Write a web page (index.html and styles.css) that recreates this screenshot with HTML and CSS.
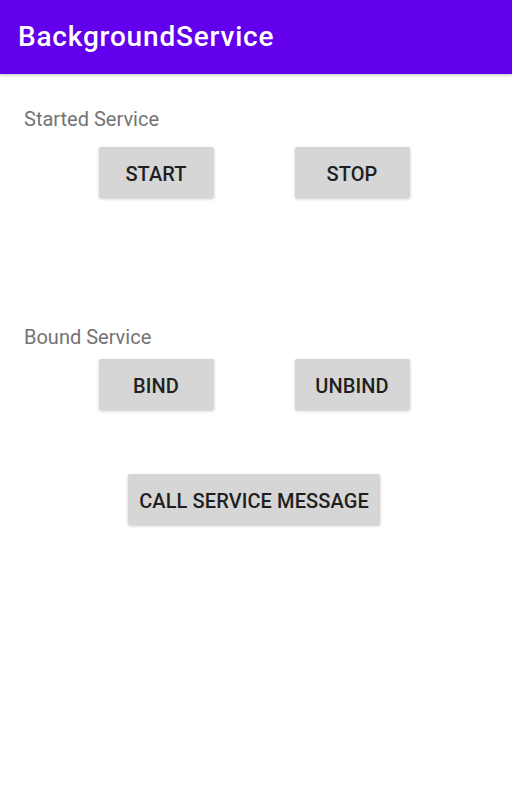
FILE: index.html
```html
<!DOCTYPE html>
<html lang="en">
<head>
    <meta charset="UTF-8">
    <meta name="viewport" content="width=device-width, initial-scale=1.0">
    <title>BackgroundService</title>
    <link rel="stylesheet" href="styles.css">
</head>
<body>
    <header class="app-bar">BackgroundService</header>

    <main class="content">
        <div class="section-label started-label">Started Service</div>
        <div class="button-row started-row">
            <button class="service-button">START</button>
            <button class="service-button">STOP</button>
        </div>

        <div class="section-label bound-label">Bound Service</div>
        <div class="button-row bound-row">
            <button class="service-button">BIND</button>
            <button class="service-button">UNBIND</button>
        </div>

        <div class="button-row message-row">
            <button class="service-button wide">CALL SERVICE MESSAGE</button>
        </div>
    </main>
</body>
</html>
```

FILE: styles.css
```css
* {
    margin: 0;
    padding: 0;
    box-sizing: border-box;
}

html, body {
    height: 100%;
    width: 100%;
    overflow: hidden;
}

body {
    font-family: Roboto, 'Liberation Sans', Arial, sans-serif;
    background-color: #ffffff;
}

.app-bar {
    height: 74px;
    line-height: 74px;
    padding-left: 18px;
    background-color: #6200ee;
    color: #ffffff;
    font-size: 28px;
    font-weight: 500;
    letter-spacing: 0.8px;
    box-shadow: 0 1px 3px rgba(0, 0, 0, 0.25);
}

.content {
    display: flex;
    flex-direction: column;
}

.section-label {
    height: 24px;
    line-height: 24px;
    padding-left: 24px;
    font-size: 20px;
    color: #737373;
}

.started-label {
    margin-top: 33px;
}

.bound-label {
    margin-top: 127px;
}

.button-row {
    display: flex;
    justify-content: center;
    gap: 81px;
    padding-right: 4px;
}

.started-row {
    margin-top: 16px;
}

.bound-row {
    margin-top: 10px;
}

.message-row {
    margin-top: 64px;
}

.service-button {
    width: 115px;
    height: 51px;
    border: none;
    border-radius: 2px;
    background-color: #d6d6d6;
    color: #1f1f1f;
    font-family: Roboto, 'Liberation Sans', Arial, sans-serif;
    font-size: 20px;
    font-weight: 500;
    letter-spacing: 0.1px;
    padding-top: 2px;
    box-shadow: 0 1px 3px rgba(0, 0, 0, 0.22);
}

.service-button.wide {
    width: 252px;
}
```
